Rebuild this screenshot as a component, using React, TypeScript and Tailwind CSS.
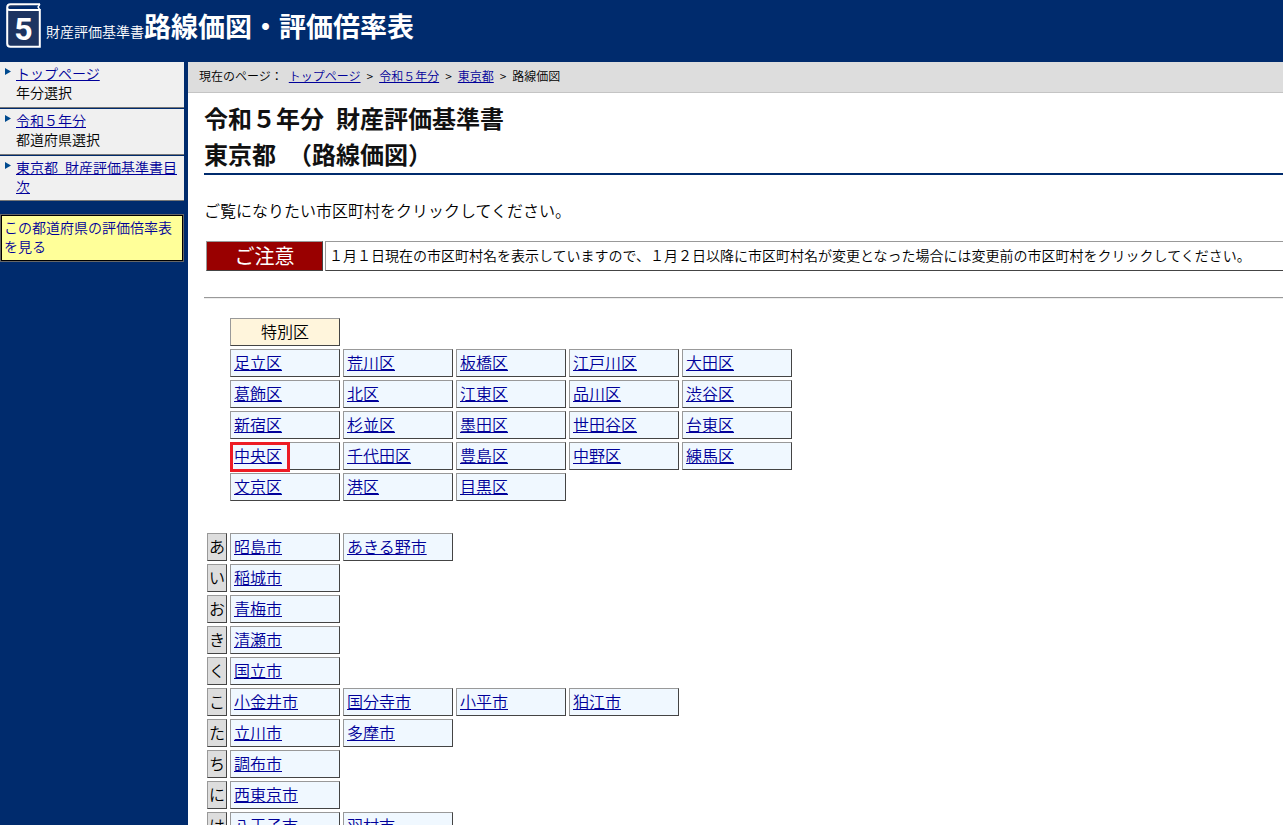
import type { ReactNode } from 'react';

const WARDS = [
  ['足立区', '荒川区', '板橋区', '江戸川区', '大田区'],
  ['葛飾区', '北区', '江東区', '品川区', '渋谷区'],
  ['新宿区', '杉並区', '墨田区', '世田谷区', '台東区'],
  ['中央区', '千代田区', '豊島区', '中野区', '練馬区'],
  ['文京区', '港区', '目黒区'],
];

const CITIES = [
  { kana: 'あ', names: ['昭島市', 'あきる野市'] },
  { kana: 'い', names: ['稲城市'] },
  { kana: 'お', names: ['青梅市'] },
  { kana: 'き', names: ['清瀬市'] },
  { kana: 'く', names: ['国立市'] },
  { kana: 'こ', names: ['小金井市', '国分寺市', '小平市', '狛江市'] },
  { kana: 'た', names: ['立川市', '多摩市'] },
  { kana: 'ち', names: ['調布市'] },
  { kana: 'に', names: ['西東京市'] },
  { kana: 'は', names: ['八王子市', '羽村市'] },
];

const HIGHLIGHTED = '中央区';

const CELL =
  'h-7 border border-t-[#999999] border-l-[#999999] border-b-[#444444] border-r-[#444444] px-0 pt-0 pb-0.5';

function Link({ children }: { children: ReactNode }) {
  return (
    <a href="#" className="text-[#000099] underline">
      {children}
    </a>
  );
}

function BookIcon() {
  return (
    <svg width="35" height="45" viewBox="0 0 35 45" className="shrink-0" aria-hidden="true">
      <path
        d="M34 1.2H4.5Q1.2 1.2 1.2 4.5V40.5Q1.2 43.8 4.5 43.8H33.8V7H4Q1.2 7 1.2 4.5"
        fill="#1d3461"
        stroke="#fff"
        strokeWidth="2"
      />
      <path d="M34 1.2L32 4L34 7" fill="none" stroke="#fff" strokeWidth="1.4" />
      <text
        x="17.5"
        y="37"
        textAnchor="middle"
        fill="#fff"
        fontFamily="Roboto, sans-serif"
        fontWeight="bold"
        fontSize="32"
      >
        5
      </text>
    </svg>
  );
}

function SideItem({ label, note }: { label: string; note?: string }) {
  return (
    <li className="mb-px flex border-b border-[#777777] bg-[#f0f0f0] pt-0.5 pb-[5px] last:pb-1">
      <svg width="16" height="14" viewBox="0 0 16 14" className="shrink-0" aria-hidden="true">
        <path d="M5 4L11 7.5L5 11Z" fill="#004a8f" />
      </svg>
      <div>
        <Link>{label}</Link>
        {note && <div>{note}</div>}
      </div>
    </li>
  );
}

function NameCell({ name }: { name: string }) {
  return (
    <td className={`${CELL} relative w-[110px] bg-[#f0f8ff]`}>
      <span className="pl-[3px]">
        <Link>{name}</Link>
      </span>
      {name === HIGHLIGHTED && (
        <span className="pointer-events-none absolute -top-px -left-px h-[30px] w-[60px] border-3 border-[#ed1c24]" />
      )}
    </td>
  );
}

export default function App() {
  return (
    <div className="flex h-screen flex-col overflow-hidden bg-[#002b6d] font-['Noto_Sans_CJK_JP',sans-serif] font-[350] text-black">
      <header className="flex h-[62px] shrink-0 items-start pt-[3px] pl-1.5 text-white">
        <BookIcon />
        <h1 className="flex items-baseline pl-[5px] leading-[46px]">
          <span className="text-sm leading-[46px]">財産評価基準書</span>
          <span className="text-[27px] leading-[46px] font-bold">路線価図・評価倍率表</span>
        </h1>
      </header>

      <div className="flex min-h-0 flex-1 gap-1">
        <nav className="w-46 shrink-0 text-sm leading-[19px]">
          <ul>
            <SideItem label="トップページ" note="年分選択" />
            <SideItem label="令和５年分" note="都道府県選択" />
            <SideItem label={'東京都\u2002財産評価基準書目次'} />
          </ul>
          <div className="mt-[13px] border border-[#666666]">
            <a href="#" className="block border border-black bg-[#ffff99] px-0.5 pt-0.5 pb-1 text-[#000099]">
              この都道府県の評価倍率表を見る
            </a>
          </div>
        </nav>

        <main className="min-w-0 flex-1 overflow-hidden bg-white">
          <div className="flex gap-1.5 border-b border-[#c4c4c4] bg-[#dddddd] px-[11px] pt-[5px] pb-[7px] text-xs leading-[18px]">
            <span>現在のページ：</span>
            <Link>トップページ</Link>
            <span>&gt;</span>
            <Link>令和５年分</Link>
            <span>&gt;</span>
            <Link>東京都</Link>
            <span>&gt;</span>
            <span>路線価図</span>
          </div>

          <div className="pt-[7px] pl-4">
            <h2 className="border-b-2 border-[#002b6d] pb-px text-2xl leading-9 font-bold text-[#111111]">
              令和５年分{'\u2002'}財産評価基準書
              <br />
              東京都{'\u2002'}（路線価図）
            </h2>

            <p className="pt-[23px] pb-px leading-6">ご覧になりたい市区町村をクリックしてください。</p>

            <div className="mt-[18px] ml-0.5 flex gap-0.5">
              <strong className="flex h-[30px] w-[117px] shrink-0 items-center justify-center border border-t-[#999999] border-l-[#999999] border-r-[#444444] border-b-[#444444] bg-[#990000] text-xl leading-7 font-normal text-white">
                ご注意
              </strong>
              <p className="h-[30px] flex-1 border border-r-0 border-t-[#999999] border-l-[#999999] border-b-[#444444] pl-[3px] text-sm leading-[26px] whitespace-nowrap">
                １月１日現在の市区町村名を表示していますので、１月２日以降に市区町村名が変更となった場合には変更前の市区町村をクリックしてください。
              </p>
            </div>

            <hr className="mt-[26px] border-t border-b border-t-[#999999] border-b-[#eeeeee]" />

            <table className="mt-4 ml-[23px] border-separate border-spacing-[3px] leading-6">
              <tbody>
                <tr>
                  <th className={`${CELL} w-[110px] bg-[#fff5dc] text-center font-[350]`}>特別区</th>
                </tr>
                {WARDS.map((row) => (
                  <tr key={row[0]}>
                    {row.map((name) => (
                      <NameCell key={name} name={name} />
                    ))}
                  </tr>
                ))}
              </tbody>
            </table>

            <table className="mt-[26px] border-separate border-spacing-[3px] leading-6">
              <tbody>
                {CITIES.map((row) => (
                  <tr key={row.kana}>
                    <th className={`${CELL} w-5 bg-[#dddddd] text-center font-[350]`}>{row.kana}</th>
                    {row.names.map((name) => (
                      <NameCell key={name} name={name} />
                    ))}
                  </tr>
                ))}
              </tbody>
            </table>
          </div>
        </main>
      </div>
    </div>
  );
}
